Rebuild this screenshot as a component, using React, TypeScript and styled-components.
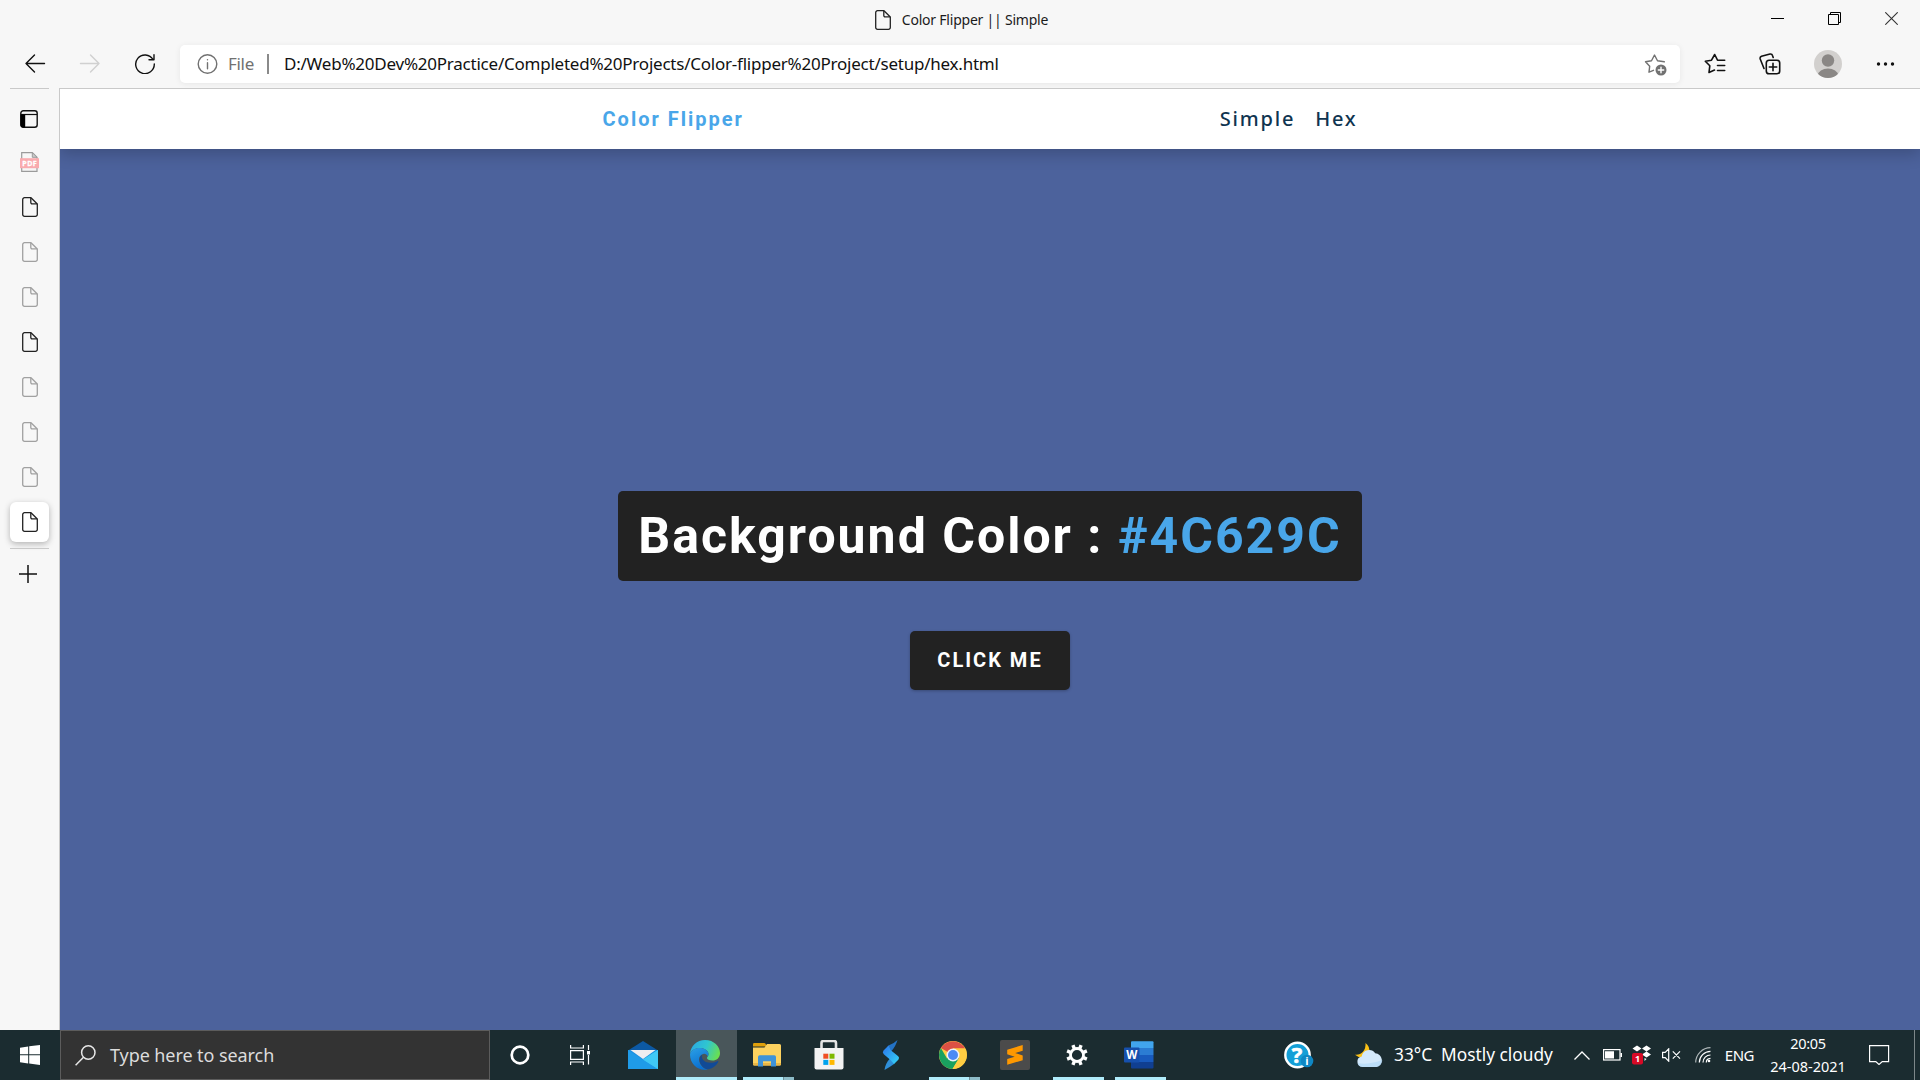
import React from "react";
import styled, { createGlobalStyle, css } from "styled-components";

const ui = `"Noto Sans", "Open Sans", sans-serif`;

const GlobalStyle = createGlobalStyle`
  * { box-sizing: border-box; }
  body { margin: 0; overflow: hidden; font-family: ${ui}; }
  svg { display: block; flex: none; }
`;

const Screen = styled.div`
  width: 1920px;
  height: 1080px;
  display: grid;
  grid-template-rows: 88px 942px 50px;
  background: #f7f7f7;
  overflow: hidden;
`;

const Chrome = styled.header`
  display: grid;
  grid-template-rows: 45px 38px;
`;

const TitleBar = styled.div`
  display: grid;
  grid-template-columns: 1fr auto 1fr;
  align-items: center;
  height: 40px;
`;

const TabTitle = styled.div`
  grid-column: 2;
  display: flex;
  align-items: center;
  gap: 11px;
  padding-left: 3px;
  color: #1b1b1b;
`;

const WindowButtons = styled.div`
  justify-self: end;
  display: flex;
  padding: 0 22px 3px 0;
  gap: 44px;
`;

const Toolbar = styled.div`
  display: flex;
  align-items: center;
  padding-left: 24px;
`;

const NavButtons = styled.div`
  display: flex;
  gap: 33px;
  width: 156px;
`;

const AddressBar = styled.div`
  width: 1500px;
  height: 38px;
  display: flex;
  align-items: center;
  padding: 0 13px 0 17px;
  border-radius: 5px;
  background: #fff;
  box-shadow: 0 1px 6px rgba(0, 0, 0, 0.07);
`;

const Scheme = styled.div`
  display: flex;
  align-items: center;
  gap: 10px;
`;

const Divider = styled.i`
  width: 2px;
  height: 20px;
  margin: 0 15px 0 13px;
  background: #8a8a8a;
`;

const Tools = styled.div`
  display: flex;
  align-items: center;
  margin-left: 24px;
  gap: 33px;
`;

const Label = styled.span<{ $size: number; $ls?: number; $color?: string }>`
  font-size: ${(p) => p.$size}px;
  letter-spacing: ${(p) => p.$ls ?? 0}px;
  color: ${(p) => p.$color ?? "inherit"};
  line-height: 1.25;
  white-space: nowrap;
`;

const Spacer = styled.div`
  flex: 1;
`;

const Body = styled.div`
  display: grid;
  grid-template-columns: 59px 1fr;
`;

const Sidebar = styled.aside`
  display: flex;
  flex-direction: column;
  padding: 0 10px;
`;

const Rule = styled.div`
  height: 1px;
  flex: none;
  background: #c9c9c9;
`;

const SideTab = styled.div<{ $height?: number; $left?: number; $right?: number; $active?: boolean; $faded?: boolean }>`
  height: ${(p) => p.$height ?? 45}px;
  flex: none;
  display: grid;
  place-items: center;
  padding: 0 ${(p) => p.$right ?? 0}px 0 ${(p) => p.$left ?? 1}px;
  svg { opacity: ${(p) => (p.$faded ? 0.4 : 1)}; }
  ${(p) =>
    p.$active &&
    css`
      height: 40px;
      margin: 3px 0 6px;
      border-radius: 6px;
      background: #fff;
      box-shadow: 0 2px 6px rgba(0, 0, 0, 0.28);
    `}
`;

const Page = styled.main`
  display: flex;
  flex-direction: column;
  border: solid #c9c9c9;
  border-width: 1px 0 0 1px;
  background: #4c629c;
  overflow: hidden;
`;

const Nav = styled.nav`
  height: 60px;
  flex: none;
  display: flex;
  justify-content: center;
  background: #fff;
  box-shadow: 0 5px 15px rgba(0, 0, 0, 0.2);
`;

const NavCenter = styled.div`
  width: 775px;
  display: flex;
  align-items: center;
  justify-content: space-between;
`;

const Brand = styled.h4`
  margin: 0;
  font: 700 20px/1 Roboto, sans-serif;
  letter-spacing: 2px;
  color: #49a6e9;
`;

const Links = styled.div`
  display: flex;
`;

const PageLink = styled.a`
  margin-right: 20px;
  font: 500 20px/1.2 "Noto Sans", sans-serif;
  letter-spacing: 1.8px;
  color: #0f3450;
`;

const Hero = styled.section`
  flex: 1;
  display: flex;
  flex-direction: column;
  align-items: center;
  justify-content: center;
  gap: 50px;
  padding-top: 2px;
`;

const Heading = styled.h2`
  height: 90px;
  margin: 0;
  padding: 0 20px;
  border-radius: 5px;
  background: #222;
  color: #fff;
  font: 700 50px/90px Roboto, sans-serif;
  letter-spacing: 2px;
  white-space: nowrap;
`;

const HexValue = styled.span`
  color: #49a6e9;
`;

const FlipButton = styled.button`
  width: 160px;
  height: 59px;
  padding: 0 0 1px;
  border: 0;
  border-radius: 5px;
  background: #222;
  color: #fff;
  font: 700 20px/1 Roboto, sans-serif;
  letter-spacing: 2px;
  box-shadow: 0 1px 3px rgba(0, 0, 0, 0.25);
`;

const Taskbar = styled.footer`
  display: flex;
  background: #1b2c30;
  color: #fff;
`;

const Start = styled.div`
  width: 60px;
  display: grid;
  place-items: center;
`;

const Search = styled.div`
  width: 430px;
  display: flex;
  align-items: center;
  gap: 14px;
  padding-left: 14px;
  border: 1px solid #5c5c5c;
  background: #333;
  color: #dcdcdc;
`;

const Apps = styled.div`
  display: flex;
  gap: 1px;
`;

const AppButton = styled.div<{ $active?: boolean; $run?: "full" | "wide" | "split"; $shift?: number }>`
  width: 61px;
  display: grid;
  place-items: center;
  padding-right: ${(p) => p.$shift ?? 1}px;
  background-color: ${(p) => (p.$active ? "#49565a" : "transparent")};
  background-repeat: no-repeat;
  background-position: center bottom;
  ${(p) =>
    p.$run &&
    css`
      background-size: ${p.$run === "full" ? 61 : 51}px 3px;
      background-image: ${p.$run === "split"
        ? "linear-gradient(90deg, #b0ecfb 40px, #6f8e97 40px 41px, #8dbcc8 41px)"
        : "linear-gradient(#b0ecfb, #b0ecfb)"};
    `}
`;

const Tray = styled.div`
  flex: 1;
  display: flex;
  align-items: center;
`;

const TrayItem = styled.div<{ $left: number }>`
  margin-left: ${(p) => p.$left}px;
  display: flex;
  align-items: center;
`;

const Clock = styled.div`
  width: 80px;
  margin-left: 14px;
  padding-bottom: 1px;
  display: flex;
  flex-direction: column;
  align-items: center;
  gap: 4px;
`;

const DesktopEdge = styled.div`
  width: 6px;
  height: 50px;
  border-left: 1px solid #7d8789;
`;

const FileIcon = () => (
  <svg width="16" height="20" viewBox="0 0 16 20" fill="none" stroke="#222" strokeWidth="1.3" strokeLinejoin="round">
    <path d="M2.7.7H9l6.3 6.3v10.5a1.8 1.8 0 0 1-1.8 1.8H2.5a1.8 1.8 0 0 1-1.8-1.8v-15A1.8 1.8 0 0 1 2.7.7Z" />
    <path d="M8.8.9v4.6a1.3 1.3 0 0 0 1.3 1.3h5" />
  </svg>
);

const PdfIcon = () => (
  <svg width="19" height="20" viewBox="0 0 19 20">
    <path d="M1.700.6h10.600L17 5.300V19.400H1.700Z" fill="#f7f7f7" stroke="#9b9b9b" strokeWidth="1.200" />
    <path d="M12.300.6v4.700H17Z" fill="#ccc" stroke="#9b9b9b" />
    <rect y="6.200" width="19" height="10" fill="#f9abaf" />
    <text x="9.700" y="13.800" fontSize="7" fontWeight="700" fontFamily="Open Sans" fill="#fff" stroke="#fff" strokeWidth=".3" textAnchor="middle" letterSpacing=".5">PDF</text>
  </svg>
);

const line = {
  fill: "none",
  stroke: "#111",
  strokeWidth: 1.4,
  strokeLinecap: "round" as const,
  strokeLinejoin: "round" as const,
};

const MailIcon = () => (
  <svg width="30" height="28" viewBox="0 0 30 28">
    <path d="M0 9.500 15 0l15 9.500Z" fill="#0c59a4" />
    <path d="M0 9v19h30V9Z" fill="#1b8fe0" />
    <path d="M30 9V28H0L15 18.700Z" fill="#35bdf2" />
    <path d="M15 18.500 30 28H0V9Z" fill="#1f9be8" />
    <path d="M30 9V28L15 18.500Z" fill="#40c8f5" />
    <path d="M2.500 9h25L15 18Z" fill="#eeeef0" />
  </svg>
);

const EdgeIcon = () => (
  <svg width="30" height="30" viewBox="0 0 30 30">
    <defs>
      <linearGradient id="edgeTop" x1="0" y1=".3" x2="1" y2=".6">
        <stop offset="0" stopColor="#2aa9e4" />
        <stop offset=".5" stopColor="#2fc6d0" />
        <stop offset="1" stopColor="#6be04d" />
      </linearGradient>
      <linearGradient id="edgeLeft" x1="0" y1="0" x2=".4" y2="1">
        <stop offset="0" stopColor="#2ba0e6" />
        <stop offset="1" stopColor="#0a6fd0" />
      </linearGradient>
    </defs>
    <path d="M0 14C.5 6 7 0 15 0c9 0 15 6.500 15 13 0 5-3.500 7.500-7.500 7.500-3.500 0-5.500-1.200-5.500-2.500 0-1 1.500-1.700 1.500-4C18.500 10.500 14 8 10 8 5 8 1 10.500 0 14Z" fill="url(#edgeTop)" />
    <path d="M0 14.500C.5 10.500 5 8 9.500 8c5 0 9 2.700 9 6 0 1-.3 1.800-.7 2.500-1-2-2.500-3-4.500-2.500-4 1-5.300 5-3.300 9.300 1.500 3.200 4.500 6 8 6.200C8 31.500 0 24 0 14.500Z" fill="url(#edgeLeft)" />
    <path d="M12.200 14.700C8.800 17 9 21 11 24.500c1.500 2.700 4.500 4.800 7.500 4.800 4.500-1 8-4 9.700-7.300.4-.9-.3-1.200-1-.8-6 3-12.500 1.500-14.500-2-.8-1.500-.8-3-.5-4.500Z" fill="#114a96" />
  </svg>
);

const ExplorerIcon = () => (
  <svg width="28" height="24" viewBox="0 0 28 24">
    <path d="M0 1.200Q0 0 1.200 0H11q1.200 0 1.700 1l1 2.500H0Z" fill="#e0a00b" />
    <path d="M0 4.500h11.500L14 1h12.500Q28 1 28 2.500V21q0 1.500-1.500 1.500h-25Q0 22.500 0 21Z" fill="#fdd25f" />
    <path d="M0 20h28v1.500q0 1-1.500 1h-25Q0 22.500 0 21.500Z" fill="#e9b646" />
    <path d="M5 23.500V14q0-1.700 1.700-1.700h14.600q1.700 0 1.700 1.700v9.500h-5v-5.200H10v5.200Z" fill="#3f93d8" />
  </svg>
);

const StoreIcon = () => (
  <svg width="30" height="30" viewBox="0 0 30 30">
    <path d="M7.500 9V3q0-2 2-2h10.500q2 0 2 2v6" fill="none" stroke="#e4e4e4" strokeWidth="2.600" />
    <path d="M.5 8h29v19.500q0 2-2 2h-25q-2 0-2-2Z" fill="#f3f3f3" />
    <path d="M9.300 13.700h5v5h-5Z" fill="#f04e23" />
    <path d="M15.500 13.700h5v5h-5Z" fill="#7fb900" />
    <path d="M9.300 19.900h5v5h-5Z" fill="#00a3ee" />
    <path d="M15.500 19.900h5v5h-5Z" fill="#ffb901" />
  </svg>
);

const BoltIcon = () => (
  <svg width="18" height="30" viewBox="0 0 18 30">
    <defs>
      <linearGradient id="bolt" x1="0" y1="0" x2="1" y2="1">
        <stop offset="0" stopColor="#2b73ea" />
        <stop offset="1" stopColor="#35d7f7" />
      </linearGradient>
    </defs>
    <path d="M15.500 0Q12 3.500 6.500 5.500L4.500 9 9 11.500Q13.500 7 15.500 0Z" fill="#2372c4" />
    <path d="M2.500 30Q8 27 12 24l1.500-3.500L8 18.500Q3.500 23 2.500 30Z" fill="#2f8fd8" />
    <path d="M6.500 5.500 1.500 10.500q-1.500 2 .3 3.700L8.500 20l3.500 4 4.500-4.500q1.300-1.700-.3-3.200L8.500 10Z" fill="url(#bolt)" />
  </svg>
);

const ChromeIcon = () => (
  <svg width="28" height="28" viewBox="0 0 28 28">
    <circle cx="14" cy="14" r="14" fill="#ffcd42" />
    <path d="M14 14 1.900 7A14 14 0 0 1 26.100 7.500H14Z" fill="#dd5144" />
    <path d="M1.900 7A14 14 0 0 0 13.500 28L20 17.500 14 14 8 17.500Z" fill="#1aa15f" />
    <path d="M14 7.500h12.100A14 14 0 0 1 13.500 28l6.300-10.600Z" fill="#ffcd42" />
    <circle cx="14" cy="14" r="6.500" fill="#eef2f8" />
    <circle cx="14" cy="14" r="5" fill="#4b8bf5" />
  </svg>
);

const SublimeIcon = () => (
  <svg width="30" height="30" viewBox="0 0 30 30">
    <rect width="30" height="30" rx="2" fill="#4b4b4b" />
    <path d="M22.700 5v5.700l-7.500 2.300 7.500 2.500v4.700L7.200 24.700v-5.700l7.500-2.300-7.500-2.500V9.700Z" fill="#ff9800" />
  </svg>
);

const GearIcon = () => (
  <svg width="22" height="22" viewBox="0 0 22 22" fill="none" stroke="#fff">
    <circle cx="11" cy="11" r="6.500" strokeWidth="2.800" />
    {[22.5, 67.5, 112.5, 157.5, 202.5, 247.5, 292.5, 337.5].map((a) => (
      <path key={a} d="M11 4V.3" strokeWidth="3.400" transform={`rotate(${a} 11 11)`} />
    ))}
  </svg>
);

const WordIcon = () => (
  <svg width="30" height="28" viewBox="0 0 30 28">
    <path d="M7 1.300Q7 .3 8 .3h20.500q1 0 1 1V7H7Z" fill="#41a5ee" />
    <path d="M7 7h22.500v7H7Z" fill="#2b7cd3" />
    <path d="M7 14h22.500v7H7Z" fill="#185abd" />
    <path d="M7 21h22.500v5.500q0 1-1 1H8q-1 0-1-1Z" fill="#103f91" />
    <rect y="6.500" width="15.500" height="15" rx="1" fill="#1650ad" />
    <text x="7.700" y="18" fontSize="11.500" fontWeight="700" fontFamily="Open Sans" fill="#fff" textAnchor="middle">W</text>
  </svg>
);

const HelpIcon = () => (
  <svg width="30" height="28" viewBox="0 0 30 28">
    <circle cx="13.500" cy="14" r="12.200" fill="#149fd7" stroke="#fff" strokeWidth="2.400" />
    <text x="13" y="21.500" fontSize="22" fontWeight="700" fontFamily="Open Sans" fill="#fff" stroke="#fff" strokeWidth=".6" textAnchor="middle">?</text>
    <circle cx="23" cy="20" r="6.300" fill="#0f87c4" />
    <text x="23" y="24" fontSize="11" fontWeight="700" fontFamily="Open Sans" fill="#fff" textAnchor="middle">i</text>
  </svg>
);

const WeatherIcon = () => (
  <svg width="28" height="25" viewBox="0 0 28 25">
    <path d="M10.500 0q5 4 3.500 9-1.500 5.500-7 5.500-4 0-7-2.700 5 .5 8-3Q11 5 10.500 0Z" fill="#fbc116" />
    <path d="M7.500 24a5.300 5.300 0 0 1-.8-10.500 7.500 7.500 0 0 1 13.500-3.300A7 7 0 0 1 21.500 24Z" fill="#d3e9fb" />
    <path d="M7.500 24a5.300 5.300 0 0 1-4.800-4q9 2.500 24.500-3A6.500 6.500 0 0 1 21.500 24Z" fill="#b2d9f7" opacity=".7" />
  </svg>
);

export default function App() {
  return (
    <>
      <GlobalStyle />
      <Screen>
        <Chrome>
          <TitleBar>
            <TabTitle>
              <FileIcon />
              <Label $size={14} $ls={-0.22}>Color Flipper || Simple</Label>
            </TabTitle>
            <WindowButtons>
              <svg width="13" height="13" viewBox="0 0 13 13"><path d="M0 6.500h13" stroke="#000" /></svg>
              <svg width="13" height="13" viewBox="0 0 13 13" fill="none" stroke="#000"><path d="M.5 2.500h10v10H.5ZM2.500 2.500v-2h10v10h-2" /></svg>
              <svg width="13" height="13" viewBox="0 0 13 13"><path d="M.3.3l12.400 12.400M12.700.3.3 12.700" stroke="#333" strokeWidth="1.100" /></svg>
            </WindowButtons>
          </TitleBar>
          <Toolbar>
            <NavButtons>
              <svg width="22" height="20" viewBox="0 0 22 20" {...line}><path d="M20.500 9.500H2M10.500 1 2 9.500l8.500 8.500" /></svg>
              <svg width="22" height="20" viewBox="0 0 22 20" {...line} stroke="#d0d0d0"><path d="M1.500 9.500H20M11.500 1 20 9.500 11.500 18" /></svg>
              <svg width="22" height="20" viewBox="0 0 22 20" {...line}><path d="M19 5.500A9.300 9.300 0 1 0 20.300 10M20 .8v5h-5" /></svg>
            </NavButtons>
            <AddressBar>
              <Scheme>
                <svg width="21" height="20" viewBox="0 0 21 20" {...line} stroke="#717171"><circle cx="10.500" cy="10" r="9.300" /><path d="M10.500 8.800v6M10.500 5.600v.2" /></svg>
                <Label $size={17} $ls={-0.3} $color="#717171">File</Label>
              </Scheme>
              <Divider />
              <Label $size={17} $ls={-0.23} $color="#111">
                D:/Web%20Dev%20Practice/Completed%20Projects/Color-flipper%20Project/setup/hex.html
              </Label>
              <Spacer />
              <svg width="23" height="23" viewBox="0 0 23 23" {...line} stroke="#717171">
                <path d="M9.500 17.300 5 19.200l.7-6L1.500 8.800l6-1L10.500 2l3 5.800 6.800 1" />
                <circle cx="17" cy="17" r="5.500" fill="#717171" stroke="none" />
                <path d="M17 14.300v5.400M14.300 17h5.400" stroke="#fff" />
              </svg>
            </AddressBar>
            <Tools>
              <svg width="22" height="22" viewBox="0 0 22 22" {...line} strokeWidth="1.600">
                <path d="M10.500 17 5 19.500l.8-6.700L1.300 8.200l6.200-1L10.700 1.500l2.800 5.700h7.200M13.500 12.500h7.200M13.500 17.500h7.200" />
              </svg>
              <svg width="22" height="22" viewBox="0 0 22 22" {...line} strokeWidth="1.600">
                <path d="M5 15.500 1.200 6Q.7 4 2.500 3.300L11 1q2-.3 2.500 1.500l.7 2" />
                <rect x="7.300" y="7.300" width="13.400" height="13.400" rx="2.800" />
                <path d="M14 10.300v7.400M10.300 14h7.400" />
              </svg>
              <svg width="28" height="28" viewBox="0 0 28 28">
                <clipPath id="face"><circle cx="14" cy="14" r="14" /></clipPath>
                <g clipPath="url(#face)">
                  <path d="M0 0h28v28H0Z" fill="#d2d0ce" />
                  <circle cx="14" cy="10.500" r="6.200" fill="#8a8785" />
                  <ellipse cx="14" cy="25" rx="10" ry="6.500" fill="#8a8785" />
                </g>
              </svg>
              <svg width="20" height="4" viewBox="-1 0 20 4" fill="#111"><circle cx="2.500" cy="2" r="1.700" /><circle cx="9.500" cy="2" r="1.700" /><circle cx="16.500" cy="2" r="1.700" /></svg>
            </Tools>
          </Toolbar>
        </Chrome>
        <Body>
          <Sidebar>
            <Rule />
            <SideTab $height={60} $left={0} $right={1}>
              <svg width="18" height="18" viewBox="0 0 18 18">
                <rect x=".8" y=".8" width="16.400" height="16.400" rx="2.500" fill="none" stroke="#111" strokeWidth="1.400" />
                <path d="M1 4.500h16" stroke="#111" strokeWidth="1.200" />
                <path d="M.5 4.500h4.700v13H3Q.5 17.500.5 15Z" fill="#000" />
              </svg>
            </SideTab>
            <SideTab $height={26} $left={0}><PdfIcon /></SideTab>
            <SideTab $height={9} />
            <SideTab><FileIcon /></SideTab>
            <SideTab $faded><FileIcon /></SideTab>
            <SideTab $faded><FileIcon /></SideTab>
            <SideTab><FileIcon /></SideTab>
            <SideTab $faded><FileIcon /></SideTab>
            <SideTab $faded><FileIcon /></SideTab>
            <SideTab $faded><FileIcon /></SideTab>
            <SideTab $active><FileIcon /></SideTab>
            <Rule />
            <SideTab $height={49} $left={0} $right={3}>
              <svg width="18" height="18" viewBox="0 0 18 18"><path d="M9 0v18M0 9h18" stroke="#111" strokeWidth="1.500" /></svg>
            </SideTab>
          </Sidebar>
          <Page>
            <Nav>
              <NavCenter>
                <Brand>Color Flipper</Brand>
                <Links>
                  <PageLink>Simple</PageLink>
                  <PageLink>Hex</PageLink>
                </Links>
              </NavCenter>
            </Nav>
            <Hero>
              <Heading>Background Color : <HexValue>#4C629C</HexValue></Heading>
              <FlipButton>CLICK ME</FlipButton>
            </Hero>
          </Page>
        </Body>
        <Taskbar>
          <Start>
            <svg width="20" height="20" viewBox="0 0 20 20" fill="#fff">
              <path d="M0 2.700 8.200 1.500v7.800H0ZM9.200 1.300 20 0v9.300H9.200ZM0 10.300h8.200v8.200L0 17.300ZM9.200 10.300H20V20L9.200 18.600Z" />
            </svg>
          </Start>
          <Search>
            <svg width="21" height="21" viewBox="0 0 21 21" fill="none" stroke="#e8e8e8" strokeWidth="1.500"><circle cx="13.300" cy="7.500" r="6.700" /><path d="M8.500 12.300.6 20.200" /></svg>
            <Label $size={18} $ls={-0.08}>Type here to search</Label>
          </Search>
          <Apps>
            <AppButton $shift={2}>
              <svg width="20" height="20" viewBox="0 0 20 20"><circle cx="10" cy="10" r="8.300" fill="none" stroke="#fff" strokeWidth="2.700" /></svg>
            </AppButton>
            <AppButton $shift={5}>
              <svg width="21" height="20" viewBox="0 0 21 20" fill="none" stroke="#fff" strokeWidth="1.200">
                <path d="M.6 0v3h12.800V0M.6 5.600h12.800v8.800H.6ZM.6 20v-3h12.800v3M18.500 0v5M18.500 10v9.500" />
                <path d="M17 6h3v3.500h-3Z" fill="#fff" stroke="none" />
              </svg>
            </AppButton>
            <AppButton $shift={3}><MailIcon /></AppButton>
            <AppButton $active $run="full" $shift={3}><EdgeIcon /></AppButton>
            <AppButton $run="split" $shift={3}><ExplorerIcon /></AppButton>
            <AppButton $shift={3}><StoreIcon /></AppButton>
            <AppButton $shift={3}><BoltIcon /></AppButton>
            <AppButton $run="split" $shift={3}><ChromeIcon /></AppButton>
            <AppButton $shift={3}><SublimeIcon /></AppButton>
            <AppButton $run="wide" $shift={3}><GearIcon /></AppButton>
            <AppButton $run="wide" $shift={3}><WordIcon /></AppButton>
          </Apps>
          <Tray>
            <TrayItem $left={113}><HelpIcon /></TrayItem>
            <TrayItem $left={41}><WeatherIcon /></TrayItem>
            <TrayItem $left={11}><Label $size={17.3}>33°C</Label></TrayItem>
            <TrayItem $left={9}><Label $size={17.3}>Mostly cloudy</Label></TrayItem>
            <TrayItem $left={21}>
              <svg width="16" height="9" viewBox="0 0 16 9" fill="none" stroke="#fff" strokeWidth="1.300"><path d="M.5 8.500 8 1l7.500 7.500" /></svg>
            </TrayItem>
            <TrayItem $left={13}>
              <svg width="19" height="12" viewBox="0 0 19 12"><rect x=".6" y=".6" width="16.400" height="10.400" fill="none" stroke="#fff" strokeWidth="1.200" /><path d="M2 2.200h9v7.300H2ZM17.500 4H19v4h-1.500Z" fill="#fff" /></svg>
            </TrayItem>
            <TrayItem $left={10}>
              <svg width="20" height="20" viewBox="0 0 20 20">
                <path d="M5 .5 9.500 3.500 5 6.500.5 3.500ZM14.500.5 19 3.500l-4.500 3L10 3.500ZM14.500 6.500 19 9.500l-4.500 3-4.500-3ZM12.500 13l2 1-2 2Z" fill="#fff" />
                <rect y="8" width="11" height="11.500" rx="2" fill="#d80a26" />
                <text x="5.500" y="17" fontSize="9" fontWeight="700" fontFamily="Open Sans" fill="#fff" textAnchor="middle">1</text>
              </svg>
            </TrayItem>
            <TrayItem $left={10}>
              <svg width="19" height="14" viewBox="0 0 19 14" fill="none" stroke="#fff" strokeWidth="1.200"><path d="M.6 4.300h2.600L6.700.8v12.400L3.200 9.700H.6ZM10.800 3.400l7.200 7.200M18 3.400l-7.200 7.200" /></svg>
            </TrayItem>
            <TrayItem $left={14}>
              <svg width="16" height="16" viewBox="0 0 16 16" fill="none" stroke="#aeb6b8" strokeWidth="1.200">
                <path d="M.7 15.500A15 15 0 0 1 15.500.7" />
                <path d="M4.300 15.500A11.300 11.300 0 0 1 15.500 4.300M8 15.500A7.500 7.500 0 0 1 15.500 8M11.300 15.500q0-4 4.200-4.200" stroke="#fff" />
                <circle cx="14" cy="14" r="1.300" fill="#fff" stroke="none" />
              </svg>
            </TrayItem>
            <TrayItem $left={14}><Label $size={15} $ls={-0.5}>ENG</Label></TrayItem>
            <Clock>
              <Label $size={14.5} $ls={-0.3}>20:05</Label>
              <Label $size={14.5}>24-08-2021</Label>
            </Clock>
            <TrayItem $left={21}>
              <svg width="21" height="20" viewBox="0 0 21 20" fill="none" stroke="#fff" strokeWidth="1.200"><path d="M.6.6h19v16h-6.300L10 19.500l-3.200-2.900H.6Z" /></svg>
            </TrayItem>
            <Spacer />
            <DesktopEdge />
          </Tray>
        </Taskbar>
      </Screen>
    </>
  );
}
